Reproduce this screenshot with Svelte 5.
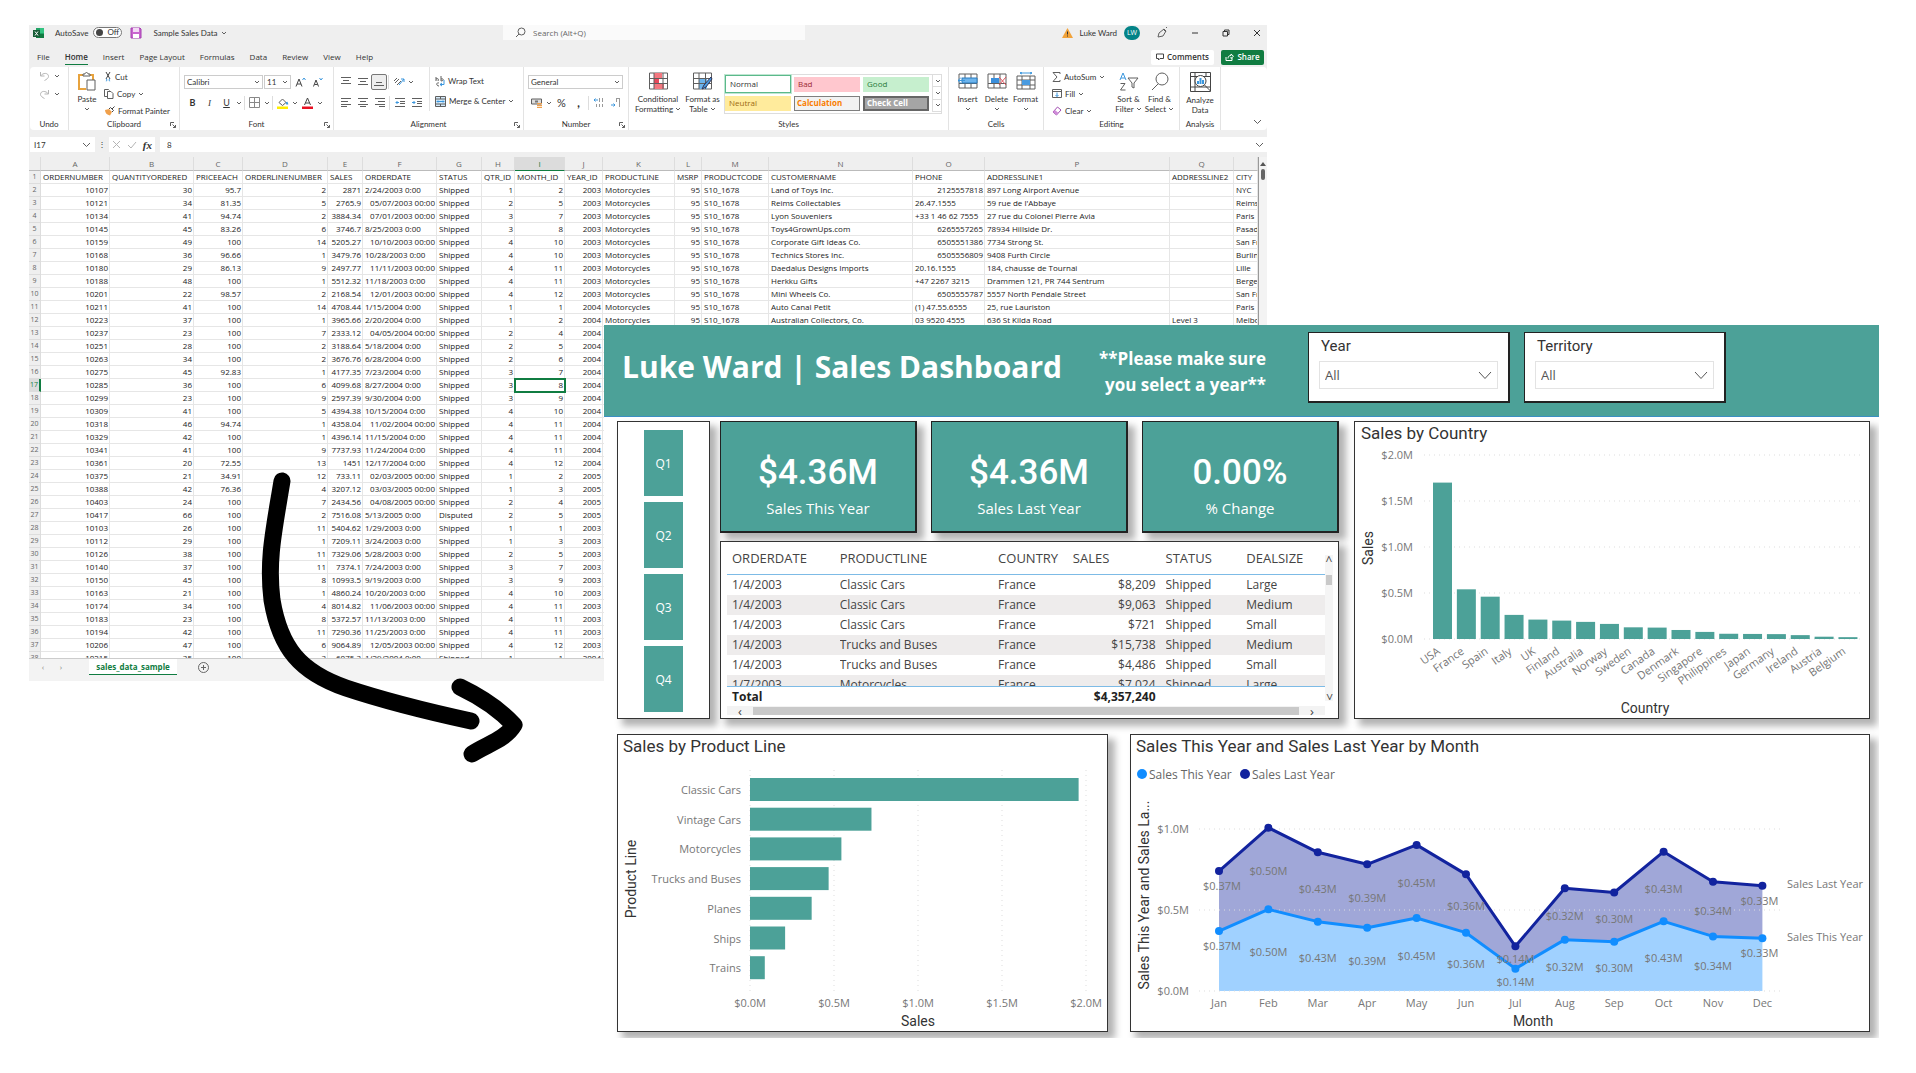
<script>
  // Each icon: width, height, and a list of [path, fill, stroke, stroke width].
  const grey = '#5f5f5f';
  const blue = '#3a96dd';
  const icons = {
    chev: [6, 4, [['M1 1l2 2 2-2', 'none', grey, 1]]],
    chevBig: [9, 6, [['M1 1l3.5 3.5L8 1', 'none', grey, 1]]],
    excel: [12, 12, [['M3 1h8v10H3z', '#21a366'], ['M7 1h4v5H7z', '#33c481'], ['M3 7h8v4H3z', '#107c41'], ['M0 3h7v7H0z', '#185c37'], ['M2 4.500l3 4M5 4.500l-3 4', 'none', '#fff', 1]]],
    save: [12, 12, [['M1 1h9l1 1v9H1z', '#c964cf', '#a43fb0', 1], ['M3 1h6v4H3z', '#f3d9f5'], ['M3 7h6v4H3z', '#fff']]],
    search: [11, 11, [['M6.500 1a3.500 3.500 0 1 1 0 7a3.500 3.500 0 1 1 0-7M4 7L1 10', 'none', grey, 1]]],
    warn: [11, 10, [['M5.500 0L11 10H0z', '#f2a33a'], ['M5.500 3.500v3M5.500 7.500v1', 'none', '#333', 1]]],
    pen: [12, 11, [['M2 10l1-4 5-4 2 2-3 5-5 1M7 2l3 3M10 1l1-1', 'none', grey, 1]]],
    min: [8, 8, [['M1 4h6', 'none', '#333', 1]]],
    restore: [8, 8, [['M1 2.500h4.500v4.500H1zM2.500 2.500V1H7v4.500H5.500', 'none', '#333', 1]]],
    close: [8, 8, [['M1 1l6 6M7 1L1 7', 'none', '#333', 1]]],
    comment: [8, 8, [['M.5 1h7v4.500H4L2.500 7V5.500H.5z', 'none', '#444', 1]]],
    share: [9, 8, [['M1 4v3.500h6V5M3 5.500c0-2 1-3 3-3V1l2.500 2.300L6 5.500V4', 'none', '#fff', 1]]],
    undo: [11, 10, [['M1.500 1v4h4M1.500 5C4 1.500 9.500 1.500 9.500 5.500c0 1.500-2 3-4 4', 'none', '#b5b5b5', 1]]],
    redo: [11, 10, [['M9.500 1v4h-4M9.500 5C7 1.500 1.500 1.500 1.500 5.500c0 1.500 2 3 4 4', 'none', '#b5b5b5', 1]]],
    paste: [19, 19, [['M5 3H1v14h7M11 3h4v5', 'none', '#e8a33d', 2], ['M5 4V2h2c0-2 3-2 3 0h2v2z', '#fff', grey, 1], ['M9 8h8v10H9z', '#fff', grey, 1]]],
    cut: [8, 10, [['M2 0l4 7M6 0L2 7', 'none', '#444', 1], ['M2 7a1 1 0 1 1-.1 2M6 7a1 1 0 1 0 .1 2', 'none', blue, 1]]],
    copy: [10, 10, [['M3.500 7.500h-3V.5h4l1 1', 'none', grey, 1], ['M3.500 2.500h3.500l2 2v5H3.500z', '#fff', grey, 1]]],
    brush: [11, 10, [['M1 4l4-1 3 3-2 3.500C3 9 1 7 1 4z', '#f0a04b'], ['M5 3l1.500-1.500 3 3L8 6M8 3l2.500-2.500', 'none', '#444', 1]]],
    growA: [11, 10, [['M1 9.500L4 2l3 7.500M2 7h4', 'none', '#444', 1], ['M7.500 3L9 1l1.500 2', 'none', blue, 1]]],
    shrinkA: [11, 10, [['M1.500 9.500L4 3l2.500 6.500M2.500 7.500h3', 'none', '#444', 1], ['M7.500 1L9 3l1.500-2', 'none', blue, 1]]],
    borders: [11, 11, [['M.5.5h10v10H.5zM5.500.5v10M.5 5.500h10', 'none', '#888', 1]]],
    bucket: [12, 12, [['M2 5.500L5.500 2l3.500 3.500-3.500 3z', '#fff', grey, 1], ['M9.500 5l1 2.500', 'none', blue, 2], ['M0 9.500h11v2.500H0z', '#ffee00']]],
    fontColor: [12, 12, [['M2.500 8L5.500 1l3 7M3.500 6h4', 'none', '#444', 1], ['M0 9.500h11v2.500H0z', '#e81123']]],
    top: [10, 9, [['M0 .5h10M2 3.500h6M0 6.500h10', 'none', grey, 1]]],
    middle: [10, 9, [['M0 1.500h10M2 4.500h6M0 7.500h10', 'none', grey, 1]]],
    bottom: [10, 9, [['M2 5.500h6M0 8.500h10', 'none', grey, 1]]],
    orient: [12, 11, [['M2 7L6 3M4 9l4-4M1 5l3-3', 'none', grey, 1], ['M6 9l5-6M8 3h3v3', 'none', blue, 1]]],
    left: [10, 9, [['M0 .5h10M0 3.500h7M0 6.500h10M0 8.500h6', 'none', grey, 1]]],
    center: [10, 9, [['M0 .5h10M2 3.500h6M0 6.500h10M2 8.500h6', 'none', grey, 1]]],
    right: [10, 9, [['M0 .5h10M3 3.500h7M0 6.500h10M4 8.500h6', 'none', grey, 1]]],
    outdent: [10, 9, [['M0 .5h10M5 3.500h5M5 5.500h5M0 8.500h10', 'none', grey, 1], ['M4 4.500H1l1.500-1.500M1 4.500L2.500 6', 'none', blue, 1]]],
    indent: [10, 9, [['M0 .5h10M5 3.500h5M5 5.500h5M0 8.500h10', 'none', grey, 1], ['M0 4.500h3L1.500 3M3 4.500L1.500 6', 'none', blue, 1]]],
    wrap: [10, 11, [['M1 1v4M1 3c2-1 3 0 2 2M6 0v5M6 3c3-1 3 2 0 2M4 7c-3-1-3 3 0 3', 'none', grey, 1], ['M5 8.500h4V4M7 7L5 8.500 7 10', 'none', blue, 1]]],
    merge: [11, 11, [['M.5.5h10v10H.5z', '#d5ebfb', grey, 1], ['M5.500 0v3M5.500 8v3M0 3h11M0 8h11', 'none', grey, 1], ['M2 5.500h7M3 4.500l-1 1 1 1M8 4.500l1 1-1 1', 'none', blue, 1]]],
    money: [11, 10, [['M.5 1h10v5H.5z', '#ddd', grey, 1], ['M4 2.500h3v2H4z', '#777'], ['M6 5h5v1.300H6zM6 7h5v1.300H6zM6 9h5v1H6z', '#f0a04b']]],
    decInc: [11, 11, [['M6 1h1v4H6zM9 1h1v4H9zM3 7h1v3H3zM6 7h1v3H6zM9 7h1v3H9z', '#999'], ['M5 3H1l1.500-1.500M1 3l1.500 1.500', 'none', blue, 1]]],
    decDec: [11, 11, [['M6 1h1v4H6zM9 1h1v9H9zM6 1h4v1H6z', '#999'], ['M1 8h4L3.500 6.500M5 8L3.500 9.500', 'none', blue, 1]]],
    cond: [19, 19, [['M.5 1h18v16H.5z', '#fff', grey, 1], ['M5 1h8v5H5zM5 12h10v5H5z', '#f4777f'], ['M5 6.500h5v5H5z', '#e8485a'], ['M5 1v16M14 1v16M.5 6.500h18M.5 11.500h18', 'none', grey, 1]]],
    fmtTable: [20, 19, [['M.5 1h18v16H.5z', '#fff', grey, 1], ['M6 7h8v10H6z', '#6db4ec'], ['M6 1v16M12.500 1v16M.5 6.500h18M.5 11.500h18', 'none', grey, 1], ['M18 5l-7 8-2 4 4-2 6-8z', '#4a9be0', '#335', 1]]],
    insert: [20, 19, [['M1 2h18v14H1zM7 2v14M13 2v14M1 11.500h18', 'none', grey, 1], ['M4 6h15v5H4z', '#6db4ec', '#2b7cc0', 1], ['M7 8.500H0l3-3M0 8.500l3 3', 'none', blue, 1]]],
    del: [20, 19, [['M1 2h18v14H1zM7 2v14M13 2v14M1 11.500h18', 'none', grey, 1], ['M4 6h8v5H4z', '#3a8fdc'], ['M12 5l7 8M19 5l-7 8', 'none', '#e0525c', 1]]],
    format: [20, 19, [['M1 4h18v13H1zM6 4v13M14 4v13M1 8h18M1 13h18', 'none', grey, 1], ['M6 8h8v5H6z', '#4a9be0'], ['M4 1h12M6 0L4 1l2 1M14 0l2 1-2 1', 'none', blue, 1]]],
    sum: [9, 10, [['M8 2V.5H1L5 5 1 9.500h7V8', 'none', grey, 1]]],
    fill: [10, 10, [['M.5.5h9v8h-9zM.5 2.500h9', 'none', grey, 1], ['M5 3.500v4M3.500 6L5 7.500 6.500 6', 'none', blue, 1]]],
    clear: [10, 10, [['M1 6l4.500-5L9 4 4.500 9z', '#fff', '#a14bb0', 1], ['M1 6l2-2 3.500 3-2 2z', '#cf8bd8']]],
    sort: [20, 19, [['M1 8l3-7 3 7M2 6h4', 'none', blue, 1], ['M1.500 11.500H6L1.500 18H6.500', 'none', grey, 1], ['M9 6h10l-4 5v5l-2-1v-4z', '#fff', grey, 1]]],
    find: [20, 19, [['M12 1a6 6 0 1 1 0 12a6 6 0 1 1 0-12M8 12l-6 6', 'none', grey, 1]]],
    analyze: [21, 20, [['M.5.5h20v19H.5zM.5 4.500h20M5 .5v19M.5 15h20M16 .5v4', 'none', '#444', 1], ['M10.500 3.500a5.500 5.500 0 1 1 0 11a5.500 5.500 0 1 1 0-11M14.500 13l6 6', '#fff', '#444', 1], ['M8 9v3M10.500 6v6M13 8v4', 'none', blue, 2]]],
    launch: [6, 6, [['M.5 4V.5H4M2.500 2.500L5.500 5.500M5.500 3v2.500H3', 'none', grey, 1]]],
    cancel: [9, 9, [['M1 1l7 7M8 1L1 8', 'none', '#b5b5b5', 1]]],
    check: [10, 8, [['M1 4l3 3 5-6', 'none', '#b5b5b5', 1]]],
    add: [11, 11, [['M5.500.5a5 5 0 1 1 0 10a5 5 0 1 1 0-10M5.500 3v5M3 5.500h5', 'none', '#666', 1]]],
    slicer: [14, 9, [['M1 1l6 6.500L13 1', 'none', '#555', 1]]]
  };

  const tabs = ['File', 'Home', 'Insert', 'Page Layout', 'Formulas', 'Data', 'Review', 'View', 'Help'];

  const columns = [
    ['A', 69], ['B', 84], ['C', 49], ['D', 85], ['E', 35], ['F', 74], ['G', 45], ['H', 33], ['I', 50],
    ['J', 38], ['K', 72], ['L', 27], ['M', 67], ['N', 144], ['O', 72], ['P', 185], ['Q', 64], ['', 0]
  ];
  const fields = ['ORDERNUMBER', 'QUANTITYORDERED', 'PRICEEACH', 'ORDERLINENUMBER', 'SALES', 'ORDERDATE', 'STATUS', 'QTR_ID', 'MONTH_ID', 'YEAR_ID', 'PRODUCTLINE', 'MSRP', 'PRODUCTCODE', 'CUSTOMERNAME', 'PHONE', 'ADDRESSLINE1', 'ADDRESSLINE2', 'CITY'];
  const orders = `10107|30|95.7|2|2871|2/24/2003 0:00|Shipped|1|2|2003
10121|34|81.35|5|2765.9|05/07/2003 00:00|Shipped|2|5|2003
10134|41|94.74|2|3884.34|07/01/2003 00:00|Shipped|3|7|2003
10145|45|83.26|6|3746.7|8/25/2003 0:00|Shipped|3|8|2003
10159|49|100|14|5205.27|10/10/2003 00:00|Shipped|4|10|2003
10168|36|96.66|1|3479.76|10/28/2003 0:00|Shipped|4|10|2003
10180|29|86.13|9|2497.77|11/11/2003 00:00|Shipped|4|11|2003
10188|48|100|1|5512.32|11/18/2003 0:00|Shipped|4|11|2003
10201|22|98.57|2|2168.54|12/01/2003 00:00|Shipped|4|12|2003
10211|41|100|14|4708.44|1/15/2004 0:00|Shipped|1|1|2004
10223|37|100|1|3965.66|2/20/2004 0:00|Shipped|1|2|2004
10237|23|100|7|2333.12|04/05/2004 00:00|Shipped|2|4|2004
10251|28|100|2|3188.64|5/18/2004 0:00|Shipped|2|5|2004
10263|34|100|2|3676.76|6/28/2004 0:00|Shipped|2|6|2004
10275|45|92.83|1|4177.35|7/23/2004 0:00|Shipped|3|7|2004
10285|36|100|6|4099.68|8/27/2004 0:00|Shipped|3|8|2004
10299|23|100|9|2597.39|9/30/2004 0:00|Shipped|3|9|2004
10309|41|100|5|4394.38|10/15/2004 0:00|Shipped|4|10|2004
10318|46|94.74|1|4358.04|11/02/2004 00:00|Shipped|4|11|2004
10329|42|100|1|4396.14|11/15/2004 0:00|Shipped|4|11|2004
10341|41|100|9|7737.93|11/24/2004 0:00|Shipped|4|11|2004
10361|20|72.55|13|1451|12/17/2004 0:00|Shipped|4|12|2004
10375|21|34.91|12|733.11|02/03/2005 00:00|Shipped|1|2|2005
10388|42|76.36|4|3207.12|03/03/2005 00:00|Shipped|1|3|2005
10403|24|100|7|2434.56|04/08/2005 00:00|Shipped|2|4|2005
10417|66|100|2|7516.08|5/13/2005 0:00|Disputed|2|5|2005
10103|26|100|11|5404.62|1/29/2003 0:00|Shipped|1|1|2003
10112|29|100|1|7209.11|3/24/2003 0:00|Shipped|1|3|2003
10126|38|100|11|7329.06|5/28/2003 0:00|Shipped|2|5|2003
10140|37|100|11|7374.1|7/24/2003 0:00|Shipped|3|7|2003
10150|45|100|8|10993.5|9/19/2003 0:00|Shipped|3|9|2003
10163|21|100|1|4860.24|10/20/2003 0:00|Shipped|4|10|2003
10174|34|100|4|8014.82|11/06/2003 00:00|Shipped|4|11|2003
10183|23|100|8|5372.57|11/13/2003 0:00|Shipped|4|11|2003
10194|42|100|11|7290.36|11/25/2003 0:00|Shipped|4|11|2003
10206|47|100|6|9064.89|12/05/2003 00:00|Shipped|4|12|2003
10215|35|100|3|6075.3|1/29/2004 0:00|Shipped|1|1|2004`.split('\n').map((l) => l.split('|'));
  const customers = `Land of Toys Inc.|2125557818|897 Long Airport Avenue||NYC
Reims Collectables|26.47.1555|59 rue de l'Abbaye||Reims
Lyon Souveniers|+33 1 46 62 7555|27 rue du Colonel Pierre Avia||Paris
Toys4GrownUps.com|6265557265|78934 Hillside Dr.||Pasadena
Corporate Gift Ideas Co.|6505551386|7734 Strong St.||San Francisco
Technics Stores Inc.|6505556809|9408 Furth Circle||Burlingame
Daedalus Designs Imports|20.16.1555|184, chausse de Tournai||Lille
Herkku Gifts|+47 2267 3215|Drammen 121, PR 744 Sentrum||Bergen
Mini Wheels Co.|6505555787|5557 North Pendale Street||San Francisco
Auto Canal Petit|(1) 47.55.6555|25, rue Lauriston||Paris
Australian Collectors, Co.|03 9520 4555|636 St Kilda Road|Level 3|Melbourne`.split('\n').map((l) => l.split('|'));
  const sheet = [
    fields,
    ...orders.map((o, i) => [
      ...o,
      ...(i < 26 ? ['Motorcycles', '95', 'S10_1678'] : ['Classic Cars', '214', 'S10_1949']),
      ...(customers[i] ?? ['', '', '', '', ''])
    ])
  ];
  // Plain numbers and true dates (zero-padded time) sit to the right, text to the left.
  const isRight = (v) => /^-?\d+(\.\d+)?$/.test(v) || / 00:00$/.test(v);

  const quarters = ['Q1', 'Q2', 'Q3', 'Q4'];
  const kpis = [['$4.36M', 'Sales This Year'], ['$4.36M', 'Sales Last Year'], ['0.00%', '% Change']];
  const details = [
    ['1/4/2003', 'Classic Cars', 'France', '$8,209', 'Shipped', 'Large'],
    ['1/4/2003', 'Classic Cars', 'France', '$9,063', 'Shipped', 'Medium'],
    ['1/4/2003', 'Classic Cars', 'France', '$721', 'Shipped', 'Small'],
    ['1/4/2003', 'Trucks and Buses', 'France', '$15,738', 'Shipped', 'Medium'],
    ['1/4/2003', 'Trucks and Buses', 'France', '$4,486', 'Shipped', 'Small'],
    ['1/7/2003', 'Motorcycles', 'France', '$7,024', 'Shipped', 'Large']
  ];
  const countries = [
    ['USA', 1.7], ['France', 0.54], ['Spain', 0.46], ['Italy', 0.262], ['UK', 0.211], ['Finland', 0.2],
    ['Australia', 0.186], ['Norway', 0.164], ['Sweden', 0.127], ['Canada', 0.124], ['Denmark', 0.098],
    ['Singapore', 0.077], ['Philippines', 0.057], ['Japan', 0.055], ['Germany', 0.053], ['Ireland', 0.042],
    ['Austria', 0.025], ['Belgium', 0.02]
  ];
  const products = [
    ['Classic Cars', 1.956], ['Vintage Cars', 0.723], ['Motorcycles', 0.544], ['Trucks and Buses', 0.468],
    ['Planes', 0.367], ['Ships', 0.209], ['Trains', 0.088]
  ];
  const months = [
    ['Jan', 0.37], ['Feb', 0.504], ['Mar', 0.428], ['Apr', 0.391], ['May', 0.451], ['Jun', 0.36],
    ['Jul', 0.138], ['Aug', 0.317], ['Sep', 0.304], ['Oct', 0.43], ['Nov', 0.337], ['Dec', 0.325]
  ];
  const ticks = [0, 0.5, 1, 1.5, 2];
  const money = (v, d = 1) => `$${v.toFixed(d)}M`;

  const cy = (v) => 217 - v * 92;
  const px = (v) => 132 + v * 168;
  const mx = (i) => 88 + i * 49.4;
  const my = (v) => 256 - v * 162;
  const edge = (i) => i === 0 || i === months.length - 1;
  const labelX = (i) => mx(i) + (i === 0 ? 3 : i === months.length - 1 ? -3 : 0);
  const labelY = (i, hi, lo) => (edge(i) ? my(hi) + 15 : (my(hi) + my(lo)) / 2 + 2) + 4;
  const line = (k) => months.map(([, v], i) => `${mx(i)},${my(v * k)}`).join(' ');
  const back = (k) => months.map(([, v], i) => `${mx(i)},${my(v * k)}`).reverse().join(' ');
  // July's value is shown as $0.14M and September's as $0.30M.
</script>

{#snippet icon(name)}
  {@const [w, h, parts] = icons[name]}
  <svg class="icon" width={w} height={h} viewBox="0 0 {w} {h}" aria-hidden="true">
    {#each parts as [d, fill, stroke, sw]}
      <path {d} {fill} stroke={stroke ?? 'none'} stroke-width={sw ?? 0} />
    {/each}
  </svg>
{/snippet}

{#snippet tool(name, label)}
  <button class="tool" aria-label={label}>{@render icon(name)}</button>
{/snippet}

{#snippet drop(label)}
  <button class="drop" aria-label="{label} options">{@render icon('chev')}</button>
{/snippet}

{#snippet big(name, first, second)}
  <button class="big">
    {@render icon(name)}
    <span>{first}</span>
    <span>{#if second}{second}{/if}{#if first !== 'Analyze'} {@render icon('chev')}{/if}</span>
  </button>
{/snippet}

{#snippet small(name, label, more)}
  <button class="small">{@render icon(name)}<span>{label}</span>{#if more}{@render icon('chev')}{/if}</button>
{/snippet}

{#snippet caption(text, launcher)}
  <div class="caption"><span>{text}</span>{#if launcher}<i>{@render icon('launch')}</i>{/if}</div>
{/snippet}

<main class="canvas">
  <section class="excel" aria-label="Workbook">
    <header class="titlebar">
      <div class="title-left">
        {@render icon('excel')}
        <label class="autosave">AutoSave <input type="checkbox" role="switch" /><span class="switch">Off</span></label>
        {@render icon('save')}
        <span class="doc">Sample Sales Data {@render icon('chev')}</span>
      </div>
      <label class="search">{@render icon('search')}<input type="text" placeholder="Search (Alt+Q)" aria-label="Search" /></label>
      <div class="title-right">
        {@render icon('warn')}
        <span class="user">Luke Ward</span>
        <span class="avatar">LW</span>
        <button aria-label="Draw">{@render icon('pen')}</button>
        <button aria-label="Minimise">{@render icon('min')}</button>
        <button aria-label="Restore">{@render icon('restore')}</button>
        <button aria-label="Close">{@render icon('close')}</button>
      </div>
    </header>

    <nav class="tabs">
      {#each tabs as t}
        <button class:active={t === 'Home'}>{t}</button>
      {/each}
      <div class="tab-actions">
        <button class="comments">{@render icon('comment')} Comments</button>
        <button class="share">{@render icon('share')} Share</button>
      </div>
    </nav>

    <div class="ribbon">
      <div class="group undo">
        <div class="body stack">
          <div class="row">{@render tool('undo', 'Undo')}{@render drop('Undo')}</div>
          <div class="row">{@render tool('redo', 'Redo')}{@render drop('Redo')}</div>
        </div>
        {@render caption('Undo')}
      </div>
      <div class="group clipboard">
        <div class="body">
          {@render big('paste', 'Paste')}
          <div class="three">
            {@render small('cut', 'Cut')}
            {@render small('copy', 'Copy', true)}
            {@render small('brush', 'Format Painter')}
          </div>
        </div>
        {@render caption('Clipboard', true)}
      </div>
      <div class="group font">
        <div class="body two">
          <div class="row">
            <span class="picker face"><select aria-label="Font"><option>Calibri</option></select>{@render icon('chev')}</span>
            <span class="picker size"><select aria-label="Font size"><option>11</option></select>{@render icon('chev')}</span>
            {@render tool('growA', 'Increase font size')}{@render tool('shrinkA', 'Decrease font size')}
          </div>
          <div class="row">
            <button class="tool"><b>B</b></button><button class="tool"><em>I</em></button><button class="tool"><u>U</u></button>{@render drop('Underline')}
            <span class="rule"></span>
            {@render tool('borders', 'Borders')}{@render drop('Borders')}
            <span class="rule"></span>
            {@render tool('bucket', 'Fill colour')}{@render drop('Fill colour')}{@render tool('fontColor', 'Font colour')}{@render drop('Font colour')}
          </div>
        </div>
        {@render caption('Font', true)}
      </div>
      <div class="group align">
        <div class="body">
          <div class="two aligners">
            <div class="row">
              {@render tool('top', 'Top align')}{@render tool('middle', 'Middle align')}<span class="pressed">{@render tool('bottom', 'Bottom align')}</span>
              <span class="rule"></span>{@render tool('orient', 'Orientation')}{@render drop('Orientation')}
            </div>
            <div class="row">
              {@render tool('left', 'Align left')}{@render tool('center', 'Centre')}{@render tool('right', 'Align right')}
              <span class="rule"></span>{@render tool('outdent', 'Decrease indent')}{@render tool('indent', 'Increase indent')}
            </div>
          </div>
          <div class="two wraps">
            <div class="row">{@render small('wrap', 'Wrap Text')}</div>
            <div class="row">{@render small('merge', 'Merge & Center', true)}</div>
          </div>
        </div>
        {@render caption('Alignment', true)}
      </div>
      <div class="group number">
        <div class="body two">
          <div class="row"><span class="picker general"><select aria-label="Number format"><option>General</option></select>{@render icon('chev')}</span></div>
          <div class="row">
            {@render tool('money', 'Accounting format')}{@render drop('Accounting')}
            <button class="tool sign">%</button><button class="tool sign comma">,</button>
            <span class="rule"></span>{@render tool('decInc', 'Increase decimal')}{@render tool('decDec', 'Decrease decimal')}
          </div>
        </div>
        {@render caption('Number', true)}
      </div>
      <div class="group styles">
        <div class="body">
          {@render big('cond', 'Conditional', 'Formatting')}
          {@render big('fmtTable', 'Format as', 'Table')}
          <div class="gallery">
            <button class="st normal">Normal</button><button class="st bad">Bad</button><button class="st good">Good</button>
            <button class="st neutral">Neutral</button><button class="st calc">Calculation</button><button class="st checkcell">Check Cell</button>
            <div class="gallery-nav"><span>{@render icon('chev')}</span><span>{@render icon('chev')}</span><span>{@render icon('chev')}</span></div>
          </div>
        </div>
        {@render caption('Styles')}
      </div>
      <div class="group cells">
        <div class="body">
          {@render big('insert', 'Insert')}{@render big('del', 'Delete')}{@render big('format', 'Format')}
        </div>
        {@render caption('Cells')}
      </div>
      <div class="group editing">
        <div class="body">
          <div class="three">
            {@render small('sum', 'AutoSum', true)}
            {@render small('fill', 'Fill', true)}
            {@render small('clear', 'Clear', true)}
          </div>
          {@render big('sort', 'Sort &', 'Filter')}{@render big('find', 'Find &', 'Select')}
        </div>
        {@render caption('Editing')}
      </div>
      <div class="group analysis">
        <div class="body">{@render big('analyze', 'Analyze', 'Data')}</div>
        {@render caption('Analysis')}
      </div>
      <button class="collapse" aria-label="Collapse ribbon">{@render icon('chevBig')}</button>
    </div>

    <div class="formula">
      <label class="namebox"><input type="text" value="I17" aria-label="Name box" />{@render icon('chevBig')}</label>
      <span class="dots">⋮</span>
      <div class="fx">{@render icon('cancel')}{@render icon('check')}<em>fx</em></div>
      <label class="entry"><input type="text" value="8" aria-label="Formula" />{@render icon('chevBig')}</label>
    </div>

    <div class="sheet">
      <div class="sheet-clip">
        <table class="grid">
          <colgroup>
            <col class="rowhead" />
            {#each columns as [, w]}<col style:width={w ? `${w}px` : 'auto'} />{/each}
          </colgroup>
          <thead>
            <tr><th></th>{#each columns as [name]}<th class:sel={name === 'I'}>{name}</th>{/each}</tr>
          </thead>
          <tbody>
            {#each sheet as r, i}
              <tr>
                <th class:sel={i === 16}>{i + 1}</th>
                {#each r as v, c}<td class:num={isRight(v)} class:cursor={i === 16 && c === 8}>{v}</td>{/each}
              </tr>
            {/each}
          </tbody>
        </table>
      </div>
      <div class="vbar"><span class="up"></span><span class="thumb"></span></div>
    </div>

    <footer class="sheetbar">
      <span class="nav">‹</span><span class="nav">›</span>
      <button class="sheet-tab">sales_data_sample</button>
      <button class="add" aria-label="New sheet">{@render icon('add')}</button>
    </footer>
  </section>

  <section class="dash" aria-label="Sales dashboard">
    <header class="banner">
      <h1>Luke Ward | Sales Dashboard</h1>
      <p>**Please make sure<br />you select a year**</p>
      <div class="slicer">
        <label for="year">Year</label>
        <span class="pick"><select id="year"><option>All</option></select>{@render icon('slicer')}</span>
      </div>
      <div class="slicer">
        <label for="territory">Territory</label>
        <span class="pick"><select id="territory"><option>All</option></select>{@render icon('slicer')}</span>
      </div>
    </header>

    <div class="upper">
      <div class="panel quarters">
        {#each quarters as q}<button>{q}</button>{/each}
      </div>

      <div class="middle">
        <div class="kpis">
          {#each kpis as [value, label]}
            <div class="kpi"><strong>{value}</strong><span>{label}</span></div>
          {/each}
        </div>
        <div class="panel detail">
          <div class="detail-main">
            <table>
              <colgroup><col class="c1" /><col class="c2" /><col class="c3" /><col class="c4" /><col class="c5" /><col class="c6" /></colgroup>
              <thead><tr><th>ORDERDATE</th><th>PRODUCTLINE</th><th>COUNTRY</th><th>SALES</th><th>STATUS</th><th>DEALSIZE</th></tr></thead>
              <tbody>
                {#each details as r, i}
                  <tr class:cut={i === details.length - 1}>
                    {#each r as v, c}<td class:num={c === 3}><span>{v}</span></td>{/each}
                  </tr>
                {/each}
              </tbody>
              <tfoot><tr><td>Total</td><td></td><td></td><td class="num">$4,357,240</td><td></td><td></td></tr></tfoot>
            </table>
            <div class="hscroll"><span>‹</span><i></i><span>›</span></div>
          </div>
          <div class="vscroll"><span>^</span><i></i><span class="down">^</span></div>
        </div>
      </div>

      <div class="panel country">
        <svg viewBox="0 0 514 296" role="img" aria-label="Sales by Country">
          <text class="ct" x="6" y="17">Sales by Country</text>
          {#each ticks as t}
            <line class="dot" x1="69" x2="508" y1={cy(t)} y2={cy(t)} />
            <text class="tick end" x="58" y={cy(t) + 4}>{money(t)}</text>
          {/each}
          {#each countries as [name, v], i}
            <rect class="bar" x={78 + i * 23.85} y={cy(v)} width="19" height={v * 92} />
            <text class="tick end" transform="translate({86 + i * 23.85} {231}) rotate(-35)">{name}</text>
          {/each}
          <text class="at" transform="translate(18 126) rotate(-90)">Sales</text>
          <text class="at" x="290" y="291">Country</text>
        </svg>
      </div>
    </div>

    <div class="lower">
      <div class="panel">
        <svg viewBox="0 0 489 296" role="img" aria-label="Sales by Product Line">
          <text class="ct" x="5" y="17">Sales by Product Line</text>
          {#each ticks as t}
            <line class="dot" x1={px(t)} x2={px(t)} y1="35" y2="258" />
            <text class="tick mid" x={px(t)} y="272">{money(t)}</text>
          {/each}
          {#each products as [name, v], i}
            <rect class="bar" x="132" y={43 + i * 29.7} width={v * 168} height="23" />
            <text class="tick end" x="123" y={59 + i * 29.7}>{name}</text>
          {/each}
          <text class="at" transform="translate(18 144) rotate(-90)">Product Line</text>
          <text class="at" x="300" y="291">Sales</text>
        </svg>
      </div>
      <div class="panel">
        <svg viewBox="0 0 738 296" role="img" aria-label="Sales This Year and Sales Last Year by Month">
          <text class="ct" x="5" y="17">Sales This Year and Sales Last Year by Month</text>
          <circle class="now" cx="11" cy="39" r="5" />
          <text class="legend" x="18" y="44">Sales This Year</text>
          <circle class="prev" cx="114" cy="39" r="5" />
          <text class="legend" x="121" y="44">Sales Last Year</text>
          <polygon class="area-now" points="{line(1)} {mx(11)},{my(0)} {mx(0)},{my(0)}" />
          <polygon class="area-prev" points="{line(2)} {back(1)}" />
          {#each ticks.slice(0, 3) as t}
            <line class="dot" x1="68" x2="652" y1={my(t)} y2={my(t)} />
            <text class="tick end" x="58" y={my(t) + 4}>{money(t)}</text>
          {/each}
          <polyline class="line-prev" points={line(2)} />
          <polyline class="line-now" points={line(1)} />
          {#each months as [name, v], i}
            <circle class="prev" cx={mx(i)} cy={my(v * 2)} r="4" />
            <circle class="now" cx={mx(i)} cy={my(v)} r="4" />
            <text class="tick mid" x={labelX(i)} y={labelY(i, v * 2, v)}>{money(v, 2)}</text>
            <text class="tick mid" x={labelX(i)} y={labelY(i, v, 0)}>{money(v, 2)}</text>
            <text class="tick mid" x={mx(i)} y="272">{name}</text>
          {/each}
          <text class="tick" x="656" y="153">Sales Last Year</text>
          <text class="tick" x="656" y="206">Sales This Year</text>
          <text class="at" transform="translate(18 160) rotate(-90)">Sales This Year and Sales La...</text>
          <text class="at" x="402" y="291">Month</text>
        </svg>
      </div>
    </div>
  </section>

  <svg class="arrow" viewBox="0 0 1916 1073" aria-hidden="true">
    <path d="M282 481C274 530 267 560 272 600C280 648 300 672 346 688C388 702 425 711 471 721" />
    <path d="M460 687C485 699 501 711 514 725C505 740 487 744 472 754" />
  </svg>
</main>

<style>
  :global(body) { margin: 0; background: #fff; }
  .canvas, .canvas * { box-sizing: border-box; }
  .canvas {
    position: relative;
    min-height: 100vh;
    display: grid;
    grid-template-columns: minmax(0, 29fr) minmax(0, 575fr) minmax(0, 663fr) minmax(0, 612fr) minmax(0, 37fr);
    grid-template-rows: 25px 300px auto 1fr;
    font-family: "Open Sans", "Noto Sans", sans-serif;
    color: #333;
    overflow: hidden;
  }
  button, input, select { font: inherit; color: inherit; margin: 0; padding: 0; border: 0; background: none; border-radius: 0; outline: 0; }
  button { display: inline-flex; align-items: center; justify-content: center; }
  select { appearance: none; width: 100%; }
  input { min-width: 0; }
  .icon { display: block; flex: none; }

  .excel { grid-column: 2 / 4; grid-row: 2 / 4; align-self: start; background: #efefef; font-size: 8px; line-height: 10px; }
  .titlebar { height: 15px; display: grid; grid-template-columns: 474px minmax(0, 302px) 1fr; align-items: center; }
  .title-left { display: flex; align-items: center; padding-left: 4px; font-family: Lato, sans-serif; }
  .autosave { display: flex; align-items: center; gap: 5px; margin: 0 8px 0 10px; }
  .autosave input { position: absolute; opacity: 0; width: 1px; height: 1px; }
  .switch { position: relative; width: 29px; height: 11px; border: 1px solid #777; border-radius: 6px; background: #fff; padding-left: 13px; line-height: 9px; }
  .switch::before { content: ""; position: absolute; left: 2px; top: 1px; width: 7px; height: 7px; border-radius: 50%; background: #444; }
  .doc { display: flex; align-items: center; gap: 3px; margin-left: 11px; font-size: 8px; }
  .search { height: 15px; background: #fafafa; display: flex; align-items: center; gap: 7px; padding-left: 12px; }
  .search input { flex: 1; height: 12px; line-height: 12px; font-size: 8px; }
  .search input::placeholder { color: #666; opacity: 1; }
  .title-right { display: flex; align-items: center; justify-content: flex-end; padding-right: 6px; }
  .user { margin: 0 7px; font-family: Lato, sans-serif; }
  .avatar { width: 16px; height: 14px; border-radius: 8px; background: #038387; color: #fff; font-size: 7px; text-align: center; line-height: 14px; }
  .title-right button { margin-left: 16px; }
  .title-right button + button { margin-left: 23px; }

  .tabs { height: 27px; display: flex; align-items: center; gap: 15px; padding: 7px 3px 0 8px; }
  .tabs > button { height: 16px; border-bottom: 1px solid transparent; }
  .tabs > button.active { font-weight: 600; border-bottom: 1px solid #107c41; }
  .tab-actions { margin-left: auto; display: flex; gap: 7px; font-weight: 600; }
  .tab-actions button { height: 15px; gap: 3px; border-radius: 2px; }
  .comments { width: 63px; background: #fff; }
  .share { width: 43px; background: #107c41; color: #fff; }

  .ribbon { height: 63px; margin-left: 1px; display: flex; background: #fff; border-radius: 4px; font-family: Lato, sans-serif; }
  .group { flex: none; display: flex; flex-direction: column; border-right: 1px solid #e3e3e3; }
  .undo { width: 39px; }
  .clipboard { width: 111px; }
  .font { width: 154px; }
  .align { width: 190px; }
  .number { width: 105px; }
  .styles { width: 320px; }
  .cells { width: 95px; }
  .editing { width: 136px; }
  .analysis { width: 41px; }
  .body { height: 52px; display: flex; }
  .body.stack, .body.two, .two { flex-direction: column; }
  .two { display: flex; padding-top: 4px; }
  .row { display: flex; align-items: center; height: 21px; }
  .stack .row { height: 18px; padding-left: 6px; }
  .caption { position: relative; height: 11px; text-align: center; line-height: 11px; }
  .caption i { position: absolute; right: 3px; top: 3px; }
  .tool { width: 17px; height: 16px; font-size: 9px; }
  .tool em { font-family: "Liberation Serif", serif; }
  .drop { width: 8px; height: 16px; }
  .rule { width: 1px; height: 14px; background: #ddd; margin: 0 1px; }
  .big { flex-direction: column; justify-content: flex-start; padding-top: 5px; }
  .big > .icon { margin-bottom: 3px; }
  .big span { display: flex; align-items: center; gap: 2px; height: 10px; white-space: nowrap; }
  .three { display: flex; flex-direction: column; align-items: flex-start; padding-top: 2px; }
  .small { height: 17px; gap: 3px; white-space: nowrap; }
  .clipboard .big { width: 28px; margin: 0 3px 0 4px; }
  .clipboard .small { gap: 3px; }
  .font .row { padding-left: 4px; }
  .picker { position: relative; display: flex; align-items: center; height: 14px; border: 1px solid #ccc; padding-left: 2px; }
  .picker > .icon { position: absolute; right: 2px; top: 4px; pointer-events: none; }
  .face { width: 79px; margin-right: 1px; }
  .size { width: 27px; margin-right: 1px; }
  .general { width: 95px; }
  .aligners { width: 95px; padding-left: 3px; }
  .pressed { display: flex; border: 1px solid #777; border-radius: 2px; background: #eee; }
  .pressed .tool { width: 14px; height: 14px; }
  .wraps { padding-left: 5px; border-left: 1px solid #e3e3e3; height: 44px; }
  .number .row { padding-left: 4px; }
  .sign { font-size: 11px; }
  .comma { font-weight: 900; }
  .styles .big { width: 46px; }
  .styles .big:first-child { margin-left: 6px; }
  .styles .big + .big { width: 43px; }
  .gallery { flex: none; align-self: flex-start; margin-top: 7px; width: 218px; height: 40px; display: grid; grid-template-columns: 66px 66px 66px 10px; gap: 1px 3px; grid-auto-rows: 18px; border: 1px solid #ddd; align-items: center; font-family: "Open Sans", sans-serif; }
  .st { justify-content: flex-start; padding-left: 4px; height: 15px; }
  .normal { border: 1px solid #5bb98b; height: 18px; outline: 1px solid #bfe6d2; }
  .bad { background: #ffc7ce; color: #9c2a35; }
  .good { background: #c6efce; color: #2a7a3a; }
  .neutral { background: #ffeb9c; color: #9c6a10; }
  .calc { background: #f2f2f2; color: #fa7d00; font-weight: 700; border: 1px solid #7f7f7f; padding-left: 2px; }
  .checkcell { background: #a5a5a5; color: #fff; font-weight: 700; border: 2px solid #666; padding-left: 2px; }
  .gallery-nav { grid-column: 4; grid-row: 1 / 3; align-self: stretch; display: grid; border-left: 1px solid #ddd; }
  .gallery-nav span { display: grid; place-items: center; border-bottom: 1px solid #ddd; }
  .cells .body { padding-left: 4px; }
  .cells .big { width: 29px; }
  .editing .three { width: 69px; padding-left: 8px; }
  .editing .big { width: 31px; }
  .analysis .big { width: 40px; }
  .collapse { margin: auto 5px 5px auto; }

  .formula { display: flex; height: 27px; padding: 7px 0 5px 1px; font-family: Lato, sans-serif; }
  .namebox { width: 65px; display: flex; align-items: center; background: #fff; padding: 0 4px; }
  .namebox input, .entry input { flex: 1; height: 13px; font-size: 8px; }
  .dots { width: 14px; text-align: center; line-height: 15px; }
  .fx { width: 46px; display: flex; align-items: center; justify-content: space-around; background: #fff; }
  .fx em { font: italic bold 11px/14px "Liberation Serif", serif; }
  .entry { flex: 1; margin-left: 5px; display: flex; align-items: center; background: #fff; padding: 0 3px 0 7px; }

  .sheet { display: flex; height: 501px; }
  .sheet-clip { flex: 1; min-width: 0; overflow: hidden; }
  .grid { width: 100%; table-layout: fixed; border-collapse: separate; border-spacing: 0; background: #fff; color: #222; }
  .rowhead { width: 12px; }
  .grid th { background: #efefef; font-weight: 400; color: #666; padding: 0; line-height: 12px; border-right: 1px solid #ddd; border-bottom: 1px solid #ddd; white-space: nowrap; text-align: center; }
  .grid thead th { height: 14px; line-height: 13px; border-bottom-color: #bbb; }
  .grid tbody th { font-size: 7px; }
  .grid th.sel { background: #dcdcdc; color: #107c41; border-bottom-color: #107c41; }
  .grid tbody th.sel { border-right: 2px solid #107c41; border-bottom-color: #ddd; }
  .grid td { height: 13px; line-height: 12px; padding: 0 1px 0 2px; border-right: 1px solid #e6e6e6; border-bottom: 1px solid #e6e6e6; white-space: nowrap; overflow: hidden; }
  .grid .num { text-align: right; }
  .grid .cursor { outline: 2px solid #107c41; outline-offset: -1px; }
  .vbar { width: 9px; display: flex; flex-direction: column; align-items: center; padding-top: 5px; gap: 3px; border-left: 1px solid #999; background: #f3f3f3; }
  .up { border: 3px solid transparent; border-top: 0; border-bottom: 4px solid #555; }
  .thumb { width: 4px; height: 11px; border-radius: 2px; background: #666; }
  .sheetbar { height: 23px; display: flex; align-items: flex-start; background: #f3f3f3; border-top: 1px solid #ccc; padding-left: 5px; color: #888; }
  .nav { width: 18px; text-align: center; line-height: 16px; }
  .sheet-tab { width: 88px; height: 16px; margin: 0 21px 0 19px; background: #fff; color: #107c41; font-weight: 700; font-size: 8px; border-bottom: 1px solid #107c41; }
  .add { height: 17px; }

  .dash { grid-column: 3 / 5; grid-row: 3 / 5; align-self: start; background: #fff; z-index: 1; padding-bottom: 6px; overflow: hidden; }
  .banner { height: 92px; background: #4ca198; border-bottom: 1px solid #3b8fc4; display: flex; align-items: flex-start; padding: 7px 12% 0 18px; color: #fff; }
  h1 { margin: 13px 0 0; font-size: 30px; line-height: 44px; font-weight: 700; white-space: nowrap; }
  .banner p { margin: 14px 42px 0 auto; font-size: 17px; line-height: 26px; font-weight: 700; text-align: right; white-space: nowrap; }
  .slicer { width: 202px; flex: none; height: 71px; background: #fff; border: 1px solid #222; border-right-width: 2px; border-bottom-width: 2px; color: #333; padding: 3px 10px 0; }
  .slicer + .slicer { margin-left: 14px; }
  .slicer label { display: block; padding-left: 2px; font: 15px/20px Roboto, sans-serif; }
  .pick { position: relative; display: block; margin-top: 5px; height: 28px; border: 1px solid #e3e3e3; }
  .pick select { height: 26px; padding-left: 5px; font-size: 13px; color: #555; }
  .pick .icon { position: absolute; right: 5px; top: 9px; pointer-events: none; }

  .upper { display: grid; grid-template-columns: minmax(0, 93fr) 10px minmax(0, 619fr) 15px minmax(0, 516fr); padding: 4px 9px 0 13px; }
  .quarters { grid-column: 1; }
  .middle { grid-column: 3; }
  .country { grid-column: 5; }
  .panel { background: #fff; border: 1px solid #333; box-shadow: 6px 6px 7px 1px rgba(0, 0, 0, 0.3); }
  .panel > svg { display: block; width: 100%; height: auto; }
  .quarters { display: flex; flex-direction: column; align-items: center; gap: 6px; padding: 8px 0 6px; }
  .quarters button { flex: 1; width: 42%; background: #4ca198; color: #fff; font-size: 12px; }
  .middle { display: flex; flex-direction: column; gap: 8px; }
  .kpis { display: flex; gap: 14px; height: 112px; }
  .kpi { flex: 1; display: flex; flex-direction: column; align-items: center; background: #4ca198; color: #fff; border: 1px solid #222; border-right-width: 2px; border-bottom-width: 2px; box-shadow: 6px 6px 7px 1px rgba(0, 0, 0, 0.3); padding-top: 30px; }
  .kpi strong { font: 500 35px/42px Roboto, sans-serif; }
  .kpi span { font-size: 15px; line-height: 24px; margin-top: 2px; }
  .detail { flex: 1; display: flex; padding: 4px 5px 3px 6px; color: #444; }
  .detail-main { flex: 1; min-width: 0; }
  .detail table { width: 100%; table-layout: fixed; border-collapse: separate; border-spacing: 0; font-size: 12px; }
  .c1 { width: 18%; } .c2 { width: 26.5%; } .c3 { width: 12.5%; } .c4 { width: 15.5%; } .c5 { width: 13.5%; } .c6 { width: 14%; }
  .detail th { height: 29px; padding: 2px 0 0 5px; vertical-align: top; text-align: left; font-weight: 400; font-size: 13px; line-height: 20px; white-space: nowrap; border-bottom: 1px solid #7dbbe6; }
  .detail td { padding: 0 5px; line-height: 20px; white-space: nowrap; }
  .detail td span { display: block; height: 20px; overflow: hidden; }
  .detail .cut span { height: 11px; }
  .detail tbody tr:nth-child(even) td { background: #eeecec; }
  .detail .num { text-align: right; }
  .detail tfoot td { font-weight: 700; color: #222; border-top: 1px solid #7dbbe6; height: 20px; line-height: 19px; }
  .hscroll { display: flex; height: 9px; background: #f3f3f3; align-items: center; font-size: 13px; line-height: 8px; }
  .hscroll span { width: 26px; text-align: center; }
  .hscroll i { flex: 1; height: 8px; background: #c9c9c9; }
  .vscroll { width: 8px; display: flex; flex-direction: column; align-items: center; background: #f5f5f5; font-size: 12px; line-height: 12px; margin: 9px 0 14px; }
  .vscroll span { height: 10px; }
  .vscroll i { width: 6px; height: 10px; margin: 10px 0 auto; background: #c9c9c9; }
  .down { transform: rotate(180deg); }

  .lower { display: grid; grid-template-columns: minmax(0, 491fr) minmax(0, 740fr); column-gap: 22px; padding: 15px 9px 0 13px; }

  .ct, .at { font-family: Roboto, sans-serif; fill: #333; }
  .ct { font-size: 17px; }
  .at { font-size: 14px; text-anchor: middle; }
  .tick { font-size: 11px; fill: #777; }
  .legend { font-size: 12px; fill: #666; }
  .end { text-anchor: end; }
  .mid { text-anchor: middle; }
  .dot { stroke: #ddd; stroke-width: 1; stroke-dasharray: 1 4; }
  .bar { fill: #4ca198; }
  .now { fill: #118dff; }
  .prev { fill: #12239e; }
  .area-now { fill: #a0d1ff; }
  .area-prev { fill: #a0a7d8; }
  .line-now, .line-prev { fill: none; stroke-width: 3; stroke-linejoin: round; }
  .line-now { stroke: #118dff; }
  .line-prev { stroke: #12239e; }

  .arrow { position: absolute; left: 0; top: 0; width: 100%; height: auto; z-index: 2; pointer-events: none; }
  .arrow path { fill: none; stroke: #000; stroke-width: 17; stroke-linecap: round; stroke-linejoin: round; }
</style>
